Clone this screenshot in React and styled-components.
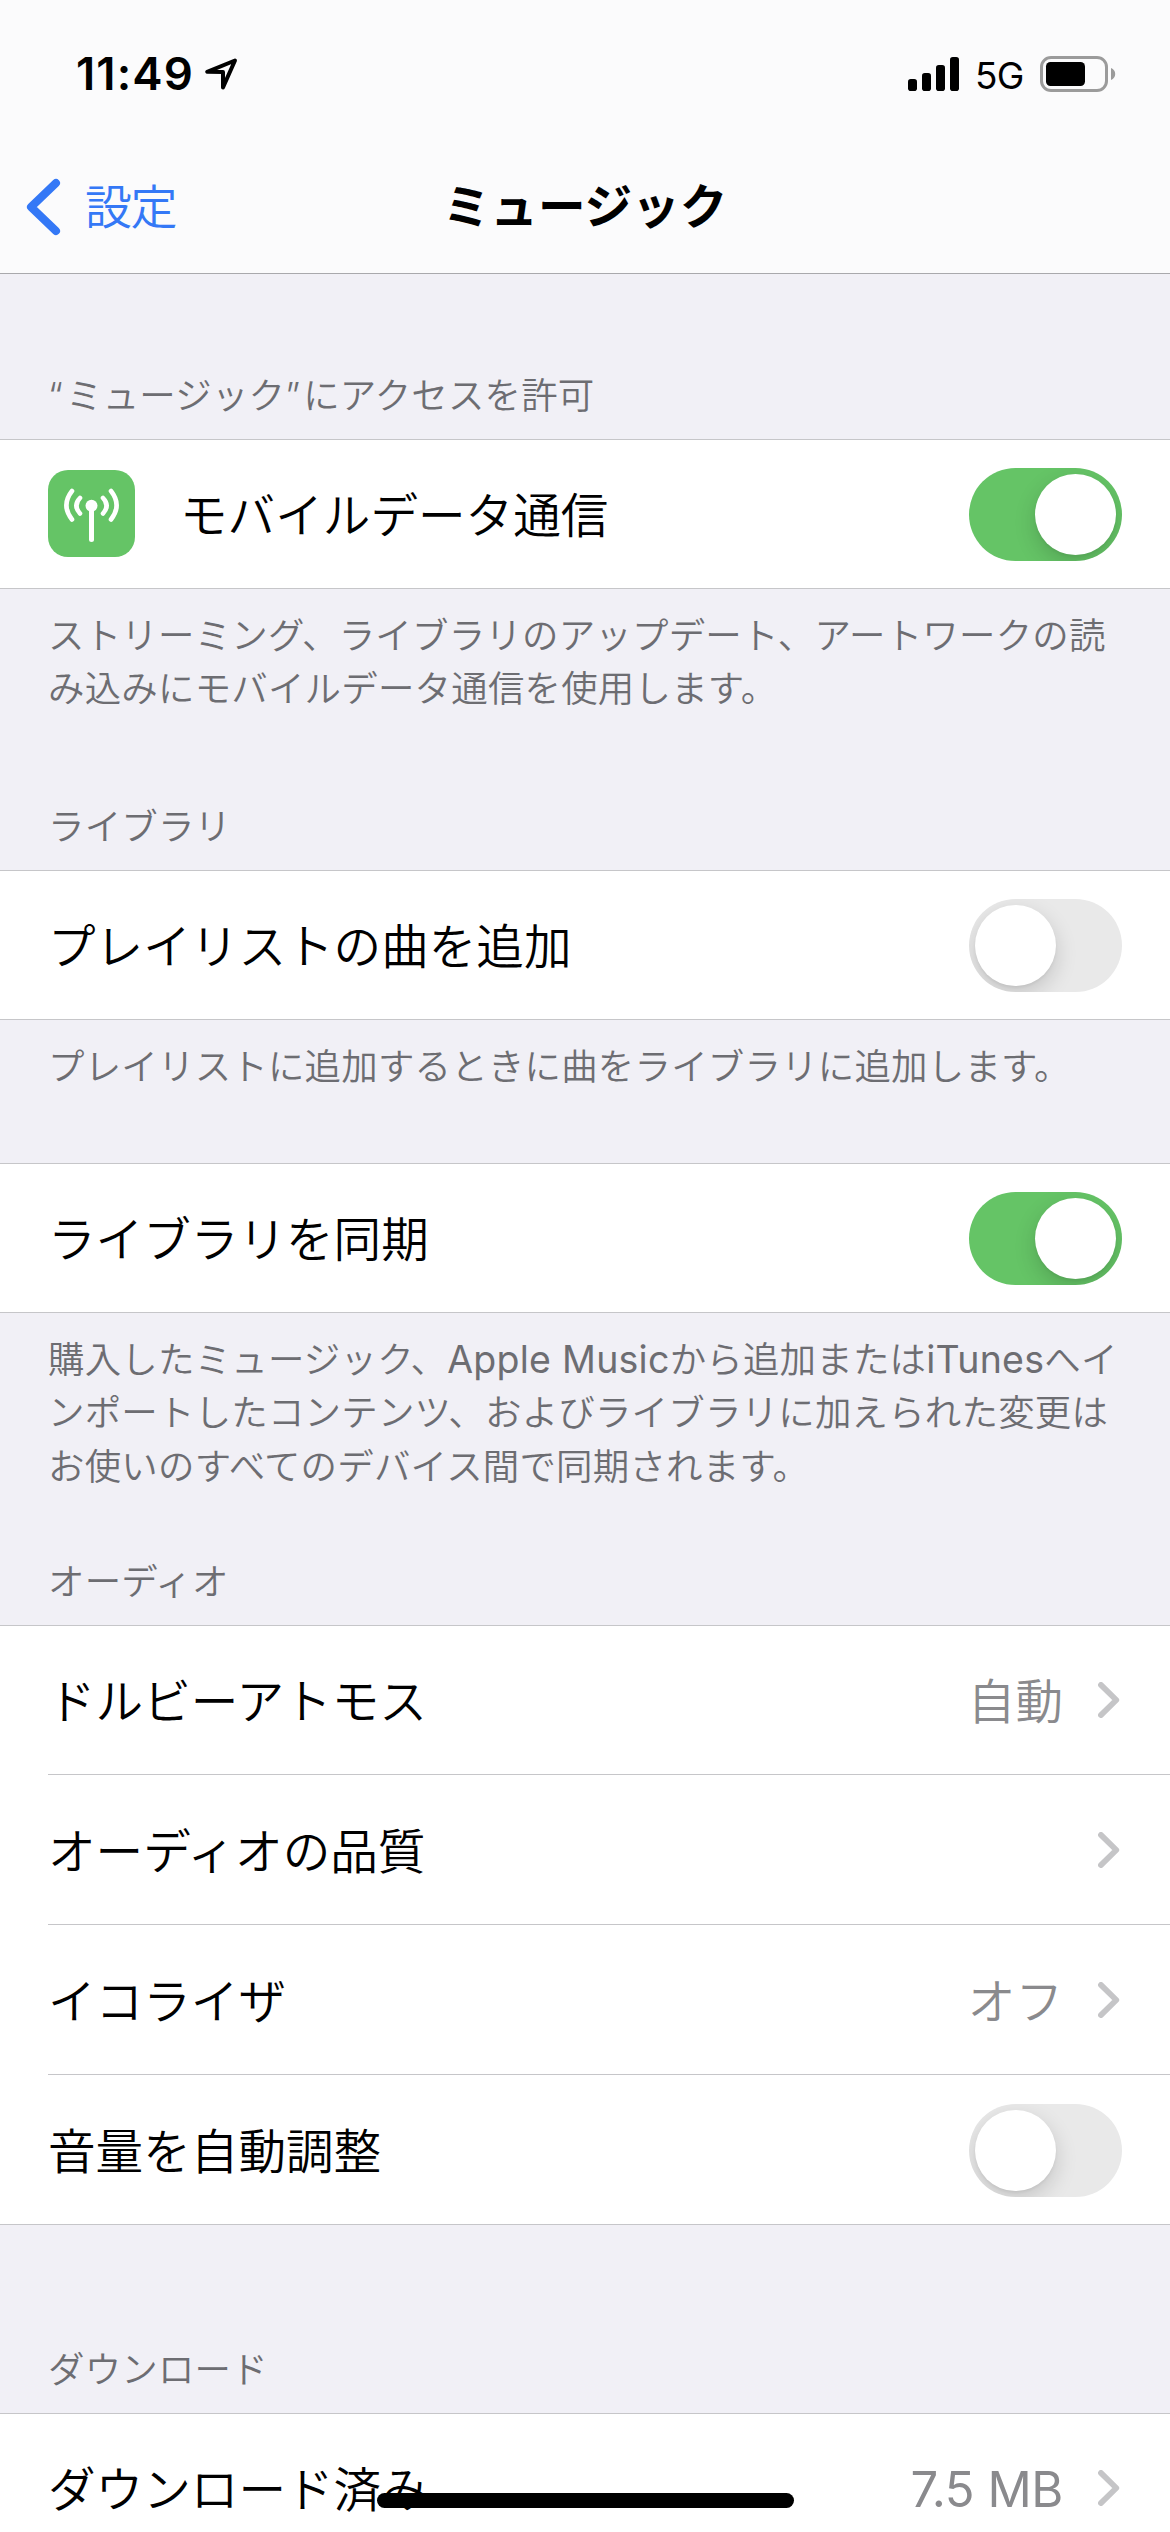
import React from "react";
import styled, { createGlobalStyle } from "styled-components";

const GlobalStyle = createGlobalStyle`
  * { box-sizing: border-box; }
  body {
    margin: 0;
    background: #f1f0f6;
    font-family: Inter, "Noto Sans CJK JP", sans-serif;
    font-weight: 350;
    color: #000;
  }
`;

const Screen = styled.div`
  position: relative;
  width: 1170px;
  height: 2532px;
  overflow: hidden;
  background: #f1f0f6;
`;

const Header = styled.header`
  height: 274px;
  background: #fbfbfc;
  border-bottom: 1px solid #a9a9ac;
`;

const StatusBar = styled.div`
  display: flex;
  align-items: center;
  justify-content: space-between;
  height: 141px;
  padding: 7px 54px 0 76px;
`;

const StatusSide = styled.div`
  display: flex;
  align-items: center;
  gap: ${(p) => p.$gap}px;
`;

const Clock = styled.span`
  font-size: 45.5px;
  font-weight: 600;
  line-height: 54px;
  letter-spacing: 1.1px;
`;

const Network = styled.span`
  width: 49px;
  padding-top: 3px;
  font-size: 37px;
  font-weight: 400;
  line-height: 44px;
  letter-spacing: -0.8px;
`;

const NavBar = styled.nav`
  display: grid;
  grid-template-columns: 1fr auto 1fr;
  align-items: center;
  height: 132px;
  padding: 0 26px;
`;

const BackButton = styled.a`
  display: flex;
  align-items: center;
  gap: 24px;
  color: #3478f6;
  font-size: 47px;
  line-height: 60px;
  letter-spacing: -1.5px;
`;

const Title = styled.h1`
  margin: 0;
  font-size: 47.6px;
  font-weight: 700;
  line-height: 60px;
`;

const Group = styled.section`
  padding-top: ${(p) => p.$space}px;
`;

const GroupHeader = styled.h2`
  margin: 0;
  padding: 2px 48px 16px;
  height: 71px;
  color: #6d6d72;
  font-size: 36.45px;
  font-weight: 350;
  line-height: 53px;
  letter-spacing: 0.2px;
  white-space: nowrap;
`;

const Quote = styled.span`
  letter-spacing: 3.2px;
`;

const GroupFooter = styled.p`
  margin: 0;
  padding: 21px 0 0 48px;
  color: #6d6d72;
  font-size: 36.45px;
  line-height: 53.333px;
  letter-spacing: 0.22px;
  white-space: nowrap;
`;

const Latin = styled.span`
  font-size: 37.5px;
  font-weight: 400;
  line-height: 1;
  letter-spacing: 0.25px;
`;

const List = styled.div`
  background: #fff;
  border-top: 1px solid #c6c6c9;
  border-bottom: 1px solid #c6c6c9;
`;

const Row = styled.div`
  display: flex;
  align-items: center;
  height: ${(p) => (p.$tall ? 149 : 148)}px;
  padding: ${(p) => (p.$tall ? 2 : 1)}px 48px 0;
`;

const Separator = styled.div`
  height: 1px;
  margin-left: 48px;
  background: #c6c6c9;
`;

const RowIcon = styled.div`
  width: 87px;
  height: 87px;
  margin: 0 45px 2px 0;
  border-radius: 20px;
  background: #65c466;
`;

const Label = styled.span`
  flex: 1;
  padding-top: 3px;
  font-size: 47.6px;
  line-height: 60px;
  white-space: nowrap;
`;

const Value = styled.span`
  margin-right: 35px;
  padding-top: 3px;
  color: #8a8a8d;
  font-size: ${(p) => (p.$latin ? 49 : 47.6)}px;
  font-weight: ${(p) => (p.$latin ? 400 : 350)};
  letter-spacing: ${(p) => (p.$latin ? -0.4 : 0)}px;
  line-height: 60px;
`;

const Track = styled.div`
  display: flex;
  justify-content: ${(p) => (p.$on ? "flex-end" : "flex-start")};
  width: 153px;
  height: 93px;
  padding: 6px;
  overflow: hidden;
  border-radius: 47px;
  background: ${(p) => (p.$on ? "#65c466" : "#e9e9e9")};
`;

const Knob = styled.div`
  width: 81px;
  height: 81px;
  border-radius: 50%;
  background: #fff;
  box-shadow: 0 8px 22px rgba(0, 0, 0, 0.16), 0 2px 3px rgba(0, 0, 0, 0.05);
`;

const HomeIndicator = styled.div`
  position: absolute;
  left: 377px;
  bottom: 24px;
  width: 417px;
  height: 15px;
  border-radius: 8px;
  background: #000;
`;

const Switch = ({ on }) => (
  <Track $on={on} role="switch" aria-checked={on}>
    <Knob />
  </Track>
);

const Chevron = () => (
  <svg width="24" height="36" viewBox="0 0 24 36" fill="none" stroke="#c5c5c7" strokeWidth="5.7" strokeLinecap="round" strokeLinejoin="round">
    <path d="M2.9 2.9 18.3 18 2.9 33.1" />
  </svg>
);

const BackChevron = () => (
  <svg width="35" height="58" viewBox="0 0 35 58" fill="none" stroke="#3478f6" strokeWidth="8" strokeLinecap="round" strokeLinejoin="round">
    <path d="M30 5 5 29 30 53" />
  </svg>
);

const LocationArrow = () => (
  <svg width="34" height="34" viewBox="0 0 34 34" fill="none" stroke="#000" strokeWidth="4" strokeLinejoin="round">
    <path d="M31 3.5 3.2 14.8 19 15 19 30.4Z" />
  </svg>
);

const Signal = () => (
  <svg width="51" height="34" viewBox="0 0 51 34">
    <rect x="0" y="22" width="9" height="12" rx="2.8" />
    <rect x="14" y="16" width="9" height="18" rx="2.8" />
    <rect x="28" y="8" width="9" height="26" rx="2.8" />
    <rect x="42" y="0" width="9" height="34" rx="2.8" />
  </svg>
);

const Battery = () => (
  <svg width="76" height="36" viewBox="0 0 76 36">
    <rect x="1.5" y="1.5" width="65" height="33" rx="9.5" fill="none" stroke="#9b9b9b" strokeWidth="3" />
    <rect x="6" y="6" width="39" height="24" rx="4.5" />
    <path d="M71 12c2.8 1.2 4.2 3.3 4.2 6s-1.4 4.8-4.2 6z" fill="#9b9b9b" />
  </svg>
);

const Antenna = () => (
  <svg width="87" height="87" viewBox="0 0 87 87" fill="none" stroke="#fff" strokeWidth="4.6" strokeLinecap="round">
    <path d="M43.5 36V69.5" strokeWidth="5" />
    <circle cx="43.5" cy="35.7" r="6" fill="#fff" stroke="none" />
    <path d="M32 28Q24.8 35.5 32 43.5M55 28Q62.2 35.5 55 43.5" />
    <path d="M24 21Q12.8 35.2 24 49.5M63 21Q74.2 35.2 63 49.5" />
  </svg>
);

export default function App() {
  return (
    <>
      <GlobalStyle />
      <Screen lang="ja">
        <Header>
          <StatusBar>
            <StatusSide $gap={10}>
              <Clock>11:49</Clock>
              <LocationArrow />
            </StatusSide>
            <StatusSide $gap={16}>
              <Signal />
              <Network>5G</Network>
              <Battery />
            </StatusSide>
          </StatusBar>
          <NavBar>
            <BackButton>
              <BackChevron />
              設定
            </BackButton>
            <Title>ミュージック</Title>
          </NavBar>
        </Header>

        <Group $space={94}>
          <GroupHeader>
            <Quote>“</Quote>ミュージック<Quote>”</Quote>にアクセスを許可
          </GroupHeader>
          <List>
            <Row>
              <RowIcon>
                <Antenna />
              </RowIcon>
              <Label>モバイルデータ通信</Label>
              <Switch on />
            </Row>
          </List>
          <GroupFooter>
            ストリーミング、ライブラリのアップデート、アートワークの読
            <br />
            み込みにモバイルデータ通信を使用します。
          </GroupFooter>
        </Group>

        <Group $space={82.333}>
          <GroupHeader>ライブラリ</GroupHeader>
          <List>
            <Row>
              <Label>プレイリストの曲を追加</Label>
              <Switch on={false} />
            </Row>
          </List>
          <GroupFooter>プレイリストに追加するときに曲をライブラリに追加します。</GroupFooter>
        </Group>

        <Group $space={68.667}>
          <List>
            <Row>
              <Label>ライブラリを同期</Label>
              <Switch on />
            </Row>
          </List>
          <GroupFooter>
            購入したミュージック、<Latin>Apple Music</Latin>から追加または<Latin>iTunes</Latin>へイ
            <br />
            ンポートしたコンテンツ、およびライブラリに加えられた変更は
            <br />
            お使いのすべてのデバイス間で同期されます。
          </GroupFooter>
        </Group>

        <Group $space={60}>
          <GroupHeader>オーディオ</GroupHeader>
          <List>
            <Row>
              <Label>ドルビーアトモス</Label>
              <Value>自動</Value>
              <Chevron />
            </Row>
            <Separator />
            <Row $tall>
              <Label>オーディオの品質</Label>
              <Chevron />
            </Row>
            <Separator />
            <Row $tall>
              <Label>イコライザ</Label>
              <Value>オフ</Value>
              <Chevron />
            </Row>
            <Separator />
            <Row $tall>
              <Label>音量を自動調整</Label>
              <Switch on={false} />
            </Row>
          </List>
        </Group>

        <Group $space={117}>
          <GroupHeader>ダウンロード</GroupHeader>
          <List>
            <Row>
              <Label>ダウンロード済み</Label>
              <Value $latin>7.5 MB</Value>
              <Chevron />
            </Row>
          </List>
        </Group>
        <HomeIndicator />
      </Screen>
    </>
  );
}
